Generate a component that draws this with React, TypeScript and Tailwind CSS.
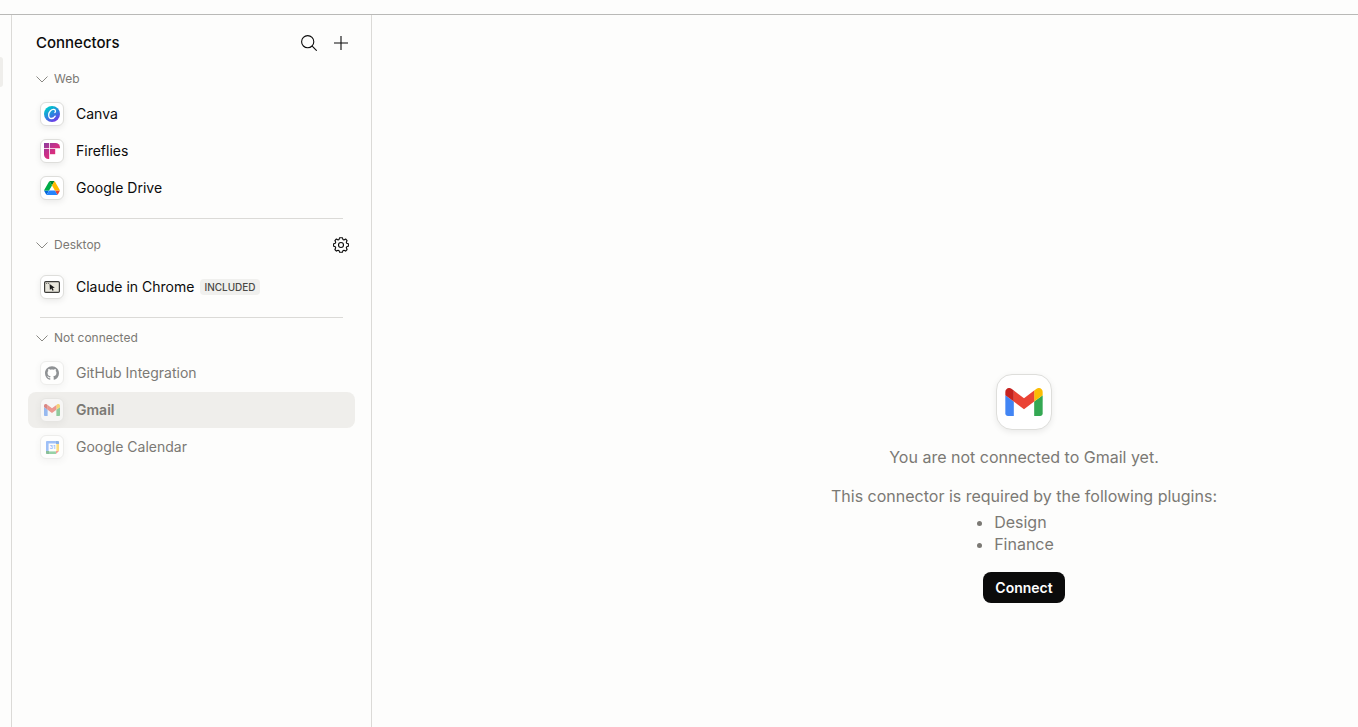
import { useState } from 'react'
import type { ReactNode } from 'react'
import { SiGithub } from 'react-icons/si'
import clsx from 'clsx'

interface Connector {
  name: string
  icon: ReactNode
  badge?: string
}

function CanvaIcon() {
  return (
    <svg viewBox="0 0 16 16" className="w-4 h-4">
      <defs>
        <linearGradient id="canva-base" x1="0.2" y1="0" x2="0.8" y2="1">
          <stop offset="0.1" stopColor="#00c4cc" />
          <stop offset="0.55" stopColor="#2f7fe0" />
          <stop offset="1" stopColor="#7d2ae8" />
        </linearGradient>
      </defs>
      <circle cx="8" cy="8" r="8" fill="url(#canva-base)" />
      <path
        d="M10.800 6.500c1-.6 1-2.900-.9-3.100C7.200 3.100 4.700 6 4.700 9c0 2 1.100 3.500 2.800 3.500 1.600 0 2.900-1 3.700-2.400"
        fill="none"
        stroke="#fff"
        strokeWidth="1.3"
        strokeLinecap="round"
      />
    </svg>
  )
}

function FirefliesIcon() {
  return (
    <svg viewBox="0 0 16 16" className="w-4 h-4">
      <defs>
        <linearGradient id="fireflies" gradientUnits="userSpaceOnUse" x1="0" y1="0" x2="13" y2="14">
          <stop offset="0" stopColor="#8b3fa0" />
          <stop offset="0.5" stopColor="#c9308a" />
          <stop offset="1" stopColor="#ea2a6c" />
        </linearGradient>
      </defs>
      <g fill="url(#fireflies)">
        <path d="M0 0h5.200v5.200H0z" />
        <path d="M6 0h5.500A4.500 4.500 0 0 1 16 4.500v.7H6z" />
        <path d="M0 6h5.200v10H4.500A4.500 4.500 0 0 1 0 11.500z" />
        <path d="M6 6h5.200v5.200H6z" />
      </g>
    </svg>
  )
}

function DriveIcon() {
  return (
    <svg viewBox="0 0 87.3 78" className="w-4 h-[14px]">
      <path fill="#0066da" d="m6.6 66.85 3.85 6.65c.8 1.4 1.95 2.5 3.3 3.3l13.75-23.8h-27.5c0 1.55.4 3.1 1.2 4.5z" />
      <path fill="#00ac47" d="m43.65 25-13.75-23.8c-1.35.8-2.5 1.9-3.3 3.3l-25.4 44a9.06 9.06 0 0 0 -1.2 4.5h27.5z" />
      <path fill="#ea4335" d="m73.55 76.8c1.35-.8 2.5-1.9 3.3-3.3l1.6-2.75 7.65-13.25c.8-1.4 1.2-2.95 1.2-4.5h-27.502l5.852 11.5z" />
      <path fill="#00832d" d="m43.65 25 13.75-23.8c-1.35-.8-2.9-1.2-4.5-1.2h-18.5c-1.6 0-3.15.45-4.5 1.2z" />
      <path fill="#2684fc" d="m59.8 53h-32.3l-13.75 23.8c1.35.8 2.9 1.2 4.5 1.2h50.8c1.6 0 3.15-.45 4.5-1.2z" />
      <path fill="#ffba00" d="m73.4 26.5-12.7-22c-.8-1.4-1.95-2.5-3.3-3.3l-13.75 23.8 16.15 28h27.45c0-1.55-.4-3.1-1.2-4.5z" />
    </svg>
  )
}

function ChromeExtensionIcon() {
  return (
    <svg viewBox="0 0 16 16" className="w-4 h-4">
      <rect x="0.6" y="2.600" width="14.800" height="10.800" rx="1.200" fill="#e8e6dc" stroke="#3d3d3a" strokeWidth="1.200" />
      <path d="M2.200 4.400h1M4.200 4.400h1" stroke="#3d3d3a" strokeWidth="0.900" />
      <path d="M5.600 5l5.200 3.800-2.200.3 1.100 2.100-1.300.6-1-2.200-1.500 1.400z" fill="#1a1a19" />
    </svg>
  )
}

function GmailIcon({ className }: { className: string }) {
  return (
    <svg viewBox="52 42 88 66" className={className}>
      <path fill="#4285f4" d="M58 108h14V74L52 59v43c0 3.32 2.69 6 6 6" />
      <path fill="#34a853" d="M120 108h14c3.32 0 6-2.69 6-6V59l-20 15" />
      <path fill="#fbbc04" d="M120 48v26l20-15v-8c0-7.42-8.47-11.65-14.4-7.2" />
      <path fill="#ea4335" d="M72 74V48l24 18 24-18v26L96 92" />
      <path fill="#c5221f" d="M52 51v8l20 15V48l-5.6-4.2c-5.94-4.45-14.4-.22-14.4 7.2" />
    </svg>
  )
}

function CalendarIcon() {
  return (
    <svg viewBox="0 0 200 200" className="w-[13px] h-[13px]">
      <path fill="#fff" d="M40 40h120v120H40z" />
      <path fill="#ea4335" d="M153 200l47-47h-47z" />
      <path fill="#fbbc04" d="M200 47h-40v106h40z" />
      <path fill="#34a853" d="M153 160H47v40h106z" />
      <path fill="#188038" d="M0 153v31c0 9 7 16 16 16h31v-47z" />
      <path fill="#1967d2" d="M200 47V16c0-9-7-16-16-16h-31v47z" />
      <path fill="#4285f4" d="M153 0H16C7 0 0 7 0 16v137h40V40h113z" />
      <text x="100" y="130" textAnchor="middle" fontSize="84" fontWeight="700" fill="#4285f4">
        31
      </text>
    </svg>
  )
}

function ChevronIcon({ open }: { open: boolean }) {
  return (
    <svg viewBox="0 0 12 12" className={clsx('w-3 h-3', !open && '-rotate-90')} fill="none" stroke="#8a8984">
      <path d="M0.500 3.500L6 9l5.500-5.500" />
    </svg>
  )
}

function SearchIcon() {
  return (
    <svg viewBox="0 0 16 16" className="w-4 h-4" fill="none" stroke="currentColor" strokeWidth="1.100">
      <circle cx="6.700" cy="6.700" r="6.100" />
      <path d="M11.200 11.200l4.500 4.500" />
    </svg>
  )
}

function PlusIcon() {
  return (
    <svg viewBox="0 0 16 16" className="w-4 h-4" fill="none" stroke="currentColor" strokeWidth="1.100">
      <path d="M8 1v14M1 8h14" />
    </svg>
  )
}

function GearIcon() {
  return (
    <svg viewBox="0 0 16 16" className="w-4 h-4" fill="none" stroke="currentColor" strokeWidth="1.100" strokeLinejoin="round">
      <path d="M6.600 0.700h2.800l.5 1.700 1 .5 1.700-.9 1.500 1.600-.8 1.700.4 1 1.700.4v2.600l-1.700.5-.4 1 .8 1.700-1.500 1.600-1.700-.9-1 .5-.5 1.600H6.600l-.5-1.600-1-.5-1.700.9-1.500-1.600.8-1.700-.4-1-1.700-.5V6.700l1.700-.4.4-1-.8-1.700L3.400 2l1.700.9 1-.5z" />
      <circle cx="8" cy="8" r="2.500" />
    </svg>
  )
}

const web: Connector[] = [
  { name: 'Canva', icon: <CanvaIcon /> },
  { name: 'Fireflies', icon: <FirefliesIcon /> },
  { name: 'Google Drive', icon: <DriveIcon /> },
]

const desktop: Connector[] = [{ name: 'Claude in Chrome', icon: <ChromeExtensionIcon />, badge: 'INCLUDED' }]

const notConnected: Connector[] = [
  { name: 'GitHub Integration', icon: <SiGithub className="w-[14px] h-[14px] text-[#24292f]" /> },
  { name: 'Gmail', icon: <GmailIcon className="w-4 h-3" /> },
  { name: 'Google Calendar', icon: <CalendarIcon /> },
]

interface SectionProps {
  title: string
  items: Connector[]
  selected: string
  onSelect: (name: string) => void
  muted?: boolean
  action?: ReactNode
}

function Section({ title, items, selected, onSelect, muted, action }: SectionProps) {
  const [open, setOpen] = useState(true)

  return (
    <section>
      <div className={clsx('flex items-center justify-between pl-2 pr-1.5', action ? 'mb-px h-11' : 'h-8')}>
        <button
          onClick={() => setOpen(!open)}
          aria-expanded={open}
          className="flex items-center gap-1.5 text-xs leading-5 text-[#7b7974]"
        >
          <ChevronIcon open={open} />
          {title}
        </button>
        {action}
      </div>
      {open && (
        <ul className="flex flex-col gap-px pt-px">
          {items.map((item) => (
            <li key={item.name}>
              <button
                onClick={() => onSelect(item.name)}
                className={clsx(
                  'flex w-full h-9 items-center gap-3 rounded-lg px-3 text-left text-sm leading-5',
                  muted ? 'text-[#7b7974]' : 'text-[#0b0b0b]',
                  selected === item.name && 'bg-[#efeeeb] font-semibold',
                )}
              >
                <span
                  className={clsx(
                    'flex w-6 h-6 shrink-0 items-center justify-center rounded-md border border-[#dededb] bg-white shadow-[0_2px_6px_rgba(0,0,0,0.08)]',
                    muted && 'opacity-50',
                  )}
                >
                  {item.icon}
                </span>
                <span className="flex items-center gap-1.5">
                  {item.name}
                  {item.badge && (
                    <span className="rounded bg-[#f0f0ee] px-1 text-[10px] leading-4 font-medium text-[#4a4946]">
                      {item.badge}
                    </span>
                  )}
                </span>
              </button>
            </li>
          ))}
        </ul>
      )}
    </section>
  )
}

function Divider() {
  return <hr className="mx-3 mt-3 mb-1 border-[#dbdad7]" />
}

export default function App() {
  const [selected, setSelected] = useState('Gmail')

  return (
    <div className="flex h-screen flex-col overflow-hidden bg-[#fdfdfc] font-['Inter',sans-serif] text-[#0b0b0b]">
      <header className="h-[15px] shrink-0 border-b border-[#b9b9b7]" />
      <div className="flex min-h-0 flex-1">
        {/* Collapsed edge of the main nav */}
        <nav className="w-3 shrink-0 border-r border-[#dbdad7] pt-[42px]">
          <div className="w-[3px] h-[30px] rounded-r-md bg-[#efeeeb]" />
        </nav>

        {/* Connector list */}
        <aside className="w-[360px] shrink-0 border-r border-[#dbdad7] px-4 pt-4">
          <div className="mb-2 flex h-6 items-center justify-between pl-2 pr-1.5">
            <h1 className="text-[15px] leading-5 font-medium">Connectors</h1>
            <div className="flex gap-4">
              <button aria-label="Search connectors">
                <SearchIcon />
              </button>
              <button aria-label="Add connector">
                <PlusIcon />
              </button>
            </div>
          </div>
          <Section title="Web" items={web} selected={selected} onSelect={setSelected} />
          <Divider />
          <Section
            title="Desktop"
            items={desktop}
            selected={selected}
            onSelect={setSelected}
            action={
              <button aria-label="Desktop settings">
                <GearIcon />
              </button>
            }
          />
          <Divider />
          <Section title="Not connected" items={notConnected} selected={selected} onSelect={setSelected} muted />
        </aside>

        {/* Detail */}
        <main className="flex flex-1 flex-col items-center justify-center pt-[235px] pl-[318px] text-base leading-[22px] text-[#7b7974]">
          <div className="flex w-14 h-14 items-center justify-center rounded-2xl border border-[#dededb] bg-white shadow-[0_2px_6px_rgba(0,0,0,0.08)]">
            <GmailIcon className="w-[38px] h-7" />
          </div>
          <p className="mt-4">You are not connected to Gmail yet.</p>
          <p className="mt-[17px] whitespace-nowrap">This connector is required by the following plugins:</p>
          <ul className="mt-1 list-disc">
            <li>Design</li>
            <li>Finance</li>
          </ul>
          <button className="mt-[17px] h-[31px] rounded-lg bg-[#0b0b0b] px-3 text-sm leading-5 font-semibold text-white">
            Connect
          </button>
        </main>
      </div>
    </div>
  )
}
